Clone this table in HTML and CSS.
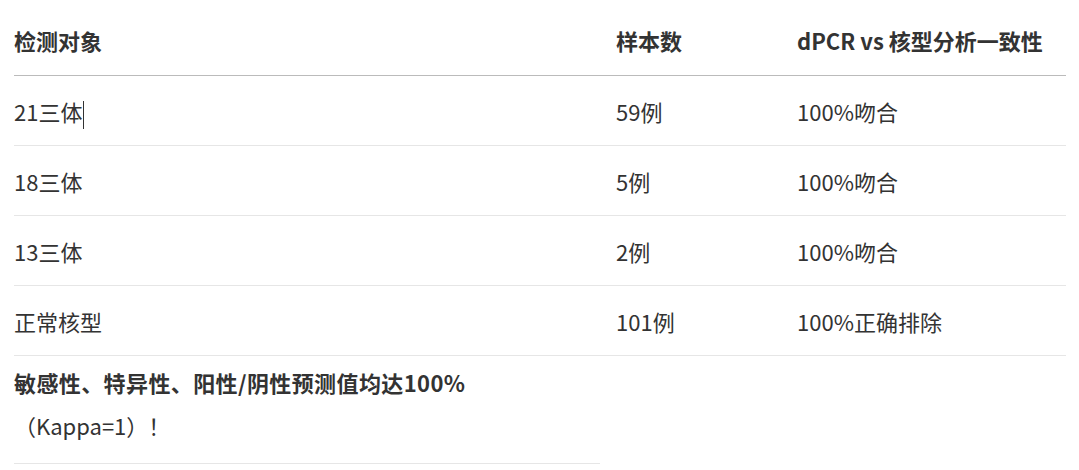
FILE: index.html
```html
<!DOCTYPE html>
<html lang="zh-CN">
<head>
<meta charset="utf-8">
<link rel="stylesheet" href="styles.css">
</head>
<body>
<table class="data">
  <colgroup>
    <col class="c1">
    <col class="c2">
    <col class="c3">
  </colgroup>
  <thead>
    <tr>
      <th>检测对象</th>
      <th>样本数</th>
      <th>dPCR vs 核型分析一致性</th>
    </tr>
  </thead>
  <tbody>
    <tr>
      <td>21三体<span class="caret"></span></td>
      <td>59例</td>
      <td>100%吻合</td>
    </tr>
    <tr>
      <td>18三体</td>
      <td>5例</td>
      <td>100%吻合</td>
    </tr>
    <tr>
      <td>13三体</td>
      <td>2例</td>
      <td>100%吻合</td>
    </tr>
    <tr>
      <td>正常核型</td>
      <td>101例</td>
      <td>100%正确排除</td>
    </tr>
    <tr class="summary">
      <td><strong class="lead">敏感性、特异性、阳性/阴性预测值均达100%</strong><br>（Kappa=1）！</td>
    </tr>
  </tbody>
</table>
</body>
</html>
```
FILE: styles.css
```css
html, body {
  margin: 0;
  padding: 0;
  background: #ffffff;
}

body {
  font-family: "Noto Sans CJK SC", "Noto Sans", sans-serif;
  font-size: 22px;
  color: #333333;
}

.data {
  border-collapse: collapse;
  table-layout: fixed;
  width: 1052px;
  margin: 5px 0 0 14px;
}

.c1 { width: 586px; }
.c2 { width: 181px; }
.c3 { width: 285px; }

.data th,
.data td {
  text-align: left;
  padding: 16px 0 15px 16px;
  line-height: 38px;
  vertical-align: middle;
}

.data th {
  padding-top: 16px;
  padding-bottom: 16px;
}

.data th:first-child,
.data td:first-child {
  padding-left: 0;
}

.data th {
  font-weight: 700;
  border-bottom: 1px solid #bbbbbb;
}

.data td {
  font-weight: 400;
  border-bottom: 1px solid #e6e6e6;
}

.data .summary td {
  padding-top: 5px;
  padding-bottom: 16px;
  line-height: 43px;
}

.data .lead {
  font-weight: 700;
  letter-spacing: 0.4px;
}

.caret {
  display: inline-block;
  width: 1px;
  height: 28px;
  background: #333333;
  vertical-align: middle;
  margin-left: 1px;
}
```
